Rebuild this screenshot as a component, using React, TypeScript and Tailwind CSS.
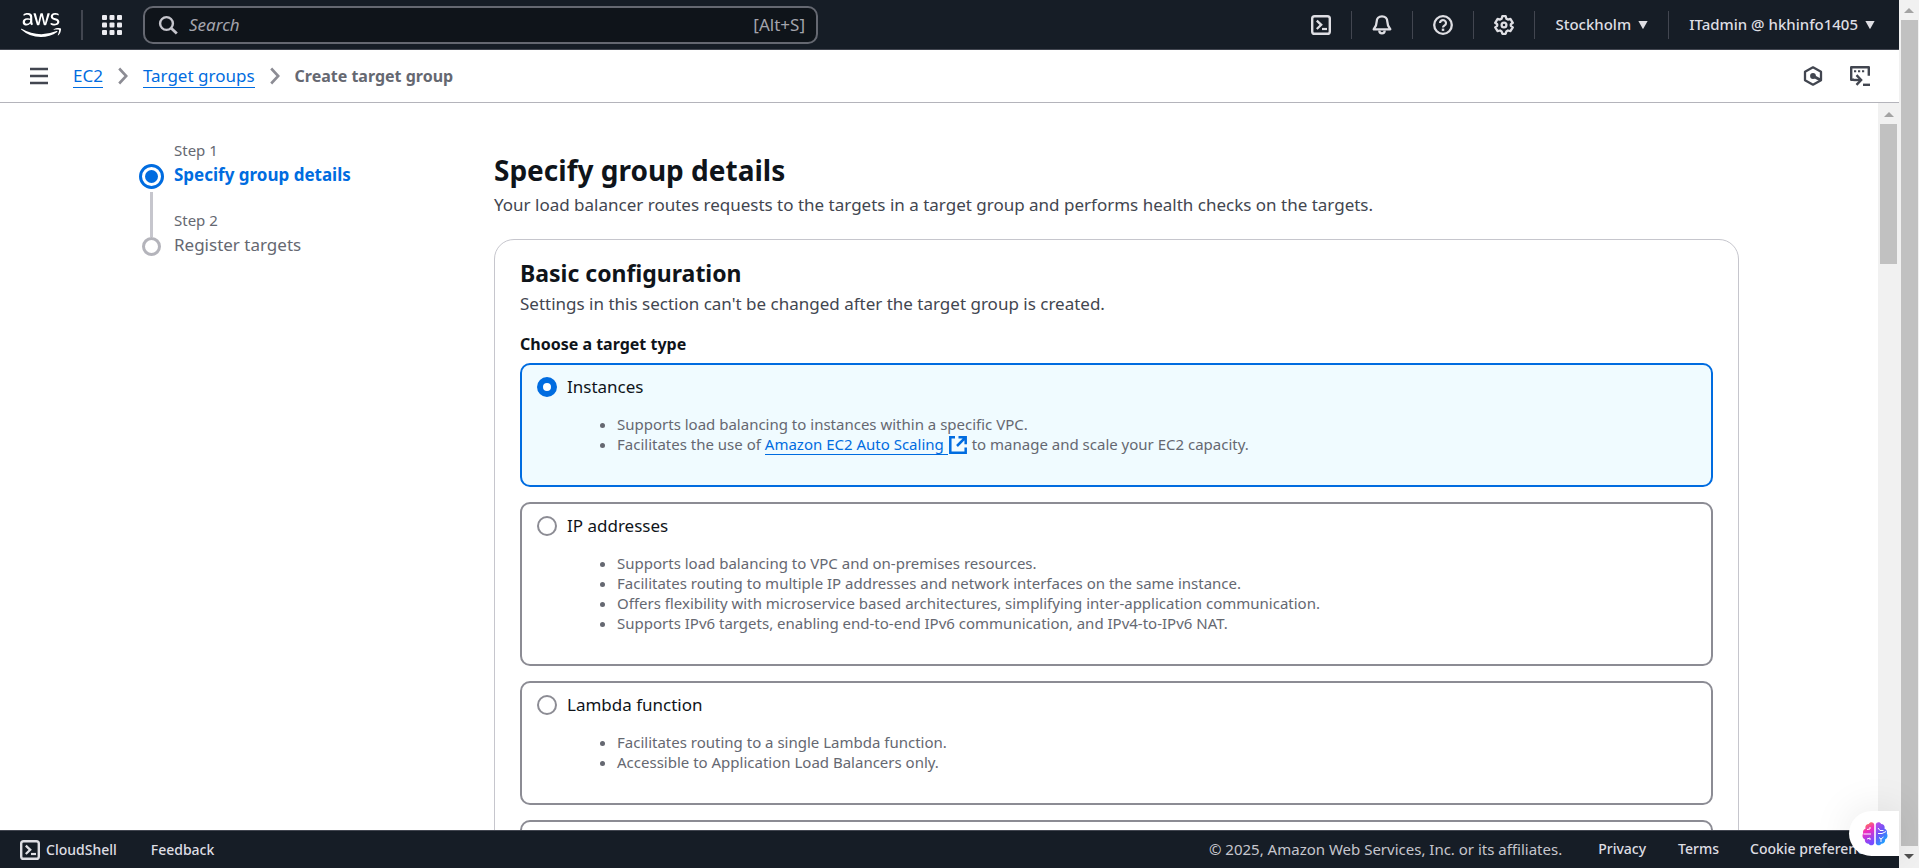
import React, { useState } from "react";
import { FaAws } from "react-icons/fa6";

const stroke = {
  fill: "none",
  stroke: "currentColor",
  strokeWidth: 2,
  strokeLinejoin: "round" as const,
};

function Icon({ size = "size-5", children }: { size?: string; children: React.ReactNode }) {
  return (
    <svg viewBox="0 0 20 20" className={`${size} shrink-0`} aria-hidden="true" {...stroke}>
      {children}
    </svg>
  );
}

function AppsIcon() {
  return (
    <svg viewBox="0 0 20 20" className="size-5 shrink-0" fill="currentColor" aria-hidden="true">
      {[0, 7.5, 15].map((y) =>
        [0, 7.5, 15].map((x) => <rect key={`${x}-${y}`} x={x} y={y} width="5" height="5" rx="1" />),
      )}
    </svg>
  );
}

function SearchIcon() {
  return (
    <Icon>
      <circle cx="8.5" cy="8.5" r="6.4" strokeWidth="2.4" />
      <path d="M13 13l5.8 5.6" strokeWidth="2.8" />
    </Icon>
  );
}

function ShellIcon() {
  return (
    <Icon>
      <rect x="1.2" y="1.2" width="17.6" height="17.6" rx="2.4" strokeWidth="2.4" />
      <path d="M5.8 5.6l4.4 4.2-4.4 4.2" strokeLinejoin="miter" strokeWidth="2.3" />
      <path d="M11 14h5" strokeWidth="2.2" />
    </Icon>
  );
}

function BellIcon() {
  return (
    <Icon>
      <path d="M10 1.3c-3.300 0-5.300 2.300-5.300 5.200 0 3.800-.9 5.300-3 7.800h16.600c-2.100-2.500-3-4-3-7.800 0-2.900-2-5.200-5.300-5.200z" strokeWidth="2.3" />
      <path d="M7.300 15.500a2.700 2.900 0 0 0 5.400 0" strokeWidth="2.3" />
    </Icon>
  );
}

function HelpIcon() {
  return (
    <Icon>
      <circle cx="10" cy="10" r="8.800" strokeWidth="2.3" />
      <path d="M7 8a3 2.900 0 1 1 4.600 2.400c-1 .7-1.600 1-1.600 2.100" strokeWidth="2.2" />
      <path d="M10 13.600v2.300" strokeWidth="2.5" />
    </Icon>
  );
}

function GearIcon() {
  return (
    <Icon>
      <path d="M8.300 1.200h3.400l.7 2.500 1.500.9 2.500-.7 2.400 3.900-2 1.400v1.600l2 1.500-2.400 3.900-2.500-.7-1.500.9-.7 2.400H8.300l-.7-2.400-1.500-.9-2.500.7-2.400-3.900 2-1.500V9.200l-2-1.400 2.400-3.900 2.500.7 1.500-.9z" strokeWidth="2.3" />
      <circle cx="10" cy="10" r="2.400" strokeWidth="2.3" />
    </Icon>
  );
}

function CaretIcon() {
  return (
    <svg viewBox="0 0 10 8" className="h-2 w-[10px] shrink-0" fill="currentColor" aria-hidden="true">
      <path d="M.4 0h9.200L5.300 7.800h-.6z" />
    </svg>
  );
}

function MenuIcon() {
  return (
    <Icon>
      <path d="M1 3h18M1 10h18M1 17h18" strokeWidth="2.500" />
    </Icon>
  );
}

function ChevronIcon() {
  return (
    <svg viewBox="0 0 10 18" className="h-[18px] w-[10px] shrink-0 text-[#8c8c94]" aria-hidden="true" {...stroke}>
      <path d="M1.200 1.500L8.200 9l-7 7.500" strokeWidth="2.600" strokeLinejoin="miter" />
    </svg>
  );
}

function HexIcon() {
  return (
    <Icon>
      <path d="M10 1.300l8 4.400v8.600l-8 4.400-8-4.400V5.700z" strokeWidth="2.300" />
      <circle cx="10" cy="10" r="2.900" fill="currentColor" stroke="none" />
      <path d="M10 10l7.500 4" strokeWidth="2.700" />
    </Icon>
  );
}

function WindowIcon() {
  return (
    <Icon>
      <path d="M4 13.800H1.200V1.200h17.600v8.500" strokeWidth="2.400" />
      <path d="M4 5.200h2.200M8 5.200h2.200M12 5.200h2.200" />
      <path d="M3.500 14h7" strokeWidth="2.400" />
      <path d="M6.500 9.200l4.600 4.800-4.600 4.800" strokeLinejoin="miter" strokeWidth="2.400" />
      <path d="M13 18.800h7" strokeWidth="2.400" />
    </Icon>
  );
}

function ExternalIcon() {
  return (
    <svg viewBox="0 0 18 18" className="mx-px inline size-[18px] align-[-4px]" aria-hidden="true" {...stroke} strokeLinejoin="miter">
      <path d="M6 1.300H1.300v15.400h15.400V11.500" strokeWidth="2.500" />
      <path d="M9.500 1.300h7.200v7M16.300 1.700L8 10" strokeWidth="2.500" />
    </svg>
  );
}

function BrainIcon() {
  return (
    <svg viewBox="0 0 26 26" className="size-[26px]" aria-hidden="true">
      <defs>
        <linearGradient id="left" x1="0" y1="0" x2="0.300" y2="1">
          <stop offset="0" stopColor="#ff9a2e" />
          <stop offset="0.450" stopColor="#f02cc0" />
          <stop offset="1" stopColor="#7a4bff" />
        </linearGradient>
        <linearGradient id="right" x1="0" y1="0" x2="0.600" y2="1">
          <stop offset="0" stopColor="#c447e8" />
          <stop offset="0.500" stopColor="#6a55f7" />
          <stop offset="1" stopColor="#17a8ff" />
        </linearGradient>
      </defs>
      <path d="M12.200 3.500C11.500.8 8 .6 6.800 3 4 3 2.800 5.500 3.600 7.600 1.400 8.500.6 10.500 1.200 12.300-.2 14.500.6 17.300 2.800 18.300c-.2 2.700 1.700 4.500 3.900 4.400 1.300 2.300 4.700 2.200 5.500-.4z" fill="url(#left)" />
      <path d="M13.800 3.500C14.500.8 18 .6 19.200 3c2.800 0 4 2.500 3.200 4.600 2.200.9 3 2.900 2.400 4.700 1.400 2.200.6 5-1.600 6 .2 2.700-1.700 4.500-3.900 4.400-1.300 2.300-4.700 2.200-5.500-.4z" fill="url(#right)" />
      <path d="M1.500 13H9M5 8.500l3-.5V6M5 18l3-1v2M16 7l2 2.500h3.500M16 12.500h4l4-2M17 16.500l2 1.500v3M19 18l2.500-2" stroke="#fff" strokeWidth="1" fill="none" />
    </svg>
  );
}

function Divider() {
  return <span className="h-7 w-px shrink-0 bg-[#424650]" />;
}

function TopBar() {
  return (
    <header className="flex h-[50px] shrink-0 items-center border-b border-[#424650] bg-[#161d26] pl-[21px] text-[#dedee3]">
      <a href="#home" aria-label="AWS home" className="text-white">
        <FaAws className="h-8 w-10" />
      </a>
      <span className="ml-5 h-[30px] w-0.5 shrink-0 bg-[#424650]" />
      <button aria-label="Services" className="ml-[19px] text-[#ebebf0]">
        <AppsIcon />
      </button>
      <label className="ml-[21px] flex h-[38px] max-w-[675px] flex-1 items-center rounded-[10px] border-2 border-[#656871] bg-[#0f141a] pr-[11px] pl-[13px] text-[#a4a4ad]">
        <span className="text-[#c6c6cd]">
          <SearchIcon />
        </span>
        <input
          type="search"
          aria-label="Search"
          placeholder="Search"
          className="ml-[11px] min-w-0 flex-1 bg-transparent text-[17px] italic outline-none placeholder:text-[#a4a4ad]"
        />
        <span className="text-[17px] whitespace-nowrap">[Alt+S]</span>
      </label>
      <nav aria-label="Account tools" className="ml-auto flex items-center gap-5 pr-6 text-[15px] font-medium whitespace-nowrap">
        <button aria-label="CloudShell"><ShellIcon /></button>
        <Divider />
        <button aria-label="Notifications"><BellIcon /></button>
        <Divider />
        <button aria-label="Help"><HelpIcon /></button>
        <Divider />
        <button aria-label="Settings"><GearIcon /></button>
        <Divider />
        <button className="flex items-center gap-[7px]">Stockholm <CaretIcon /></button>
        <Divider />
        <button className="flex items-center gap-[7px]">ITadmin @ hkhinfo1405 <CaretIcon /></button>
      </nav>
    </header>
  );
}

function Breadcrumbs() {
  return (
    <div className="flex h-[53px] shrink-0 items-center border-b border-[#b4b4bb] pr-[29px] pl-[29px] text-[17px] text-[#424650]">
      <button aria-label="Open navigation"><MenuIcon /></button>
      <nav aria-label="Breadcrumbs" className="ml-6 flex items-center gap-[15px] whitespace-nowrap">
        <a href="#ec2" className="border-b border-[#006ce0] leading-[22px] text-[#006ce0]">EC2</a>
        <ChevronIcon />
        <a href="#target-groups" className="border-b border-[#006ce0] leading-[22px] text-[#006ce0]">Target groups</a>
        <ChevronIcon />
        <span className="text-base font-bold text-[#656871]">Create target group</span>
      </nav>
      <div className="ml-auto flex items-center gap-[27px]">
        <button aria-label="Amazon Q"><HexIcon /></button>
        <button aria-label="Open side panel"><WindowIcon /></button>
      </div>
    </div>
  );
}

function Steps() {
  return (
    <ol className="pt-[37px] whitespace-nowrap">
      <li className="flex gap-[10px]">
        <div className="flex w-[25px] flex-col items-center pt-6">
          <span className="grid size-[25px] shrink-0 place-items-center rounded-full border-[3px] border-[#006ce0]">
            <span className="size-[13px] rounded-full bg-[#006ce0]" />
          </span>
          <span className="mt-[3px] mb-px w-[3px] flex-1 bg-[#c6c6cd]" />
        </div>
        <div className="h-[98px]">
          <p className="text-[15px] leading-5 text-[#656871]">Step 1</p>
          <p className="text-[17px] leading-[30px] font-bold text-[#006ce0]">Specify group details</p>
        </div>
      </li>
      <li className="-mt-7 flex gap-[10px]">
        <div className="flex w-[25px] justify-center pt-[27px]">
          <span className="size-[19px] rounded-full border-[3px] border-[#b4b4bb]" />
        </div>
        <div>
          <p className="text-[15px] leading-5 text-[#656871]">Step 2</p>
          <p className="text-[17px] leading-[30px] text-[#656871]">Register targets</p>
        </div>
      </li>
    </ol>
  );
}

const targetTypes: { id: string; title: string; points: React.ReactNode[] }[] = [
  {
    id: "instances",
    title: "Instances",
    points: [
      "Supports load balancing to instances within a specific VPC.",
      <>
        Facilitates the use of{" "}
        <a href="#auto-scaling" className="text-[#006ce0]">
          <span className="border-b border-[#006ce0] pr-1">Amazon EC2 Auto Scaling</span>
          <ExternalIcon />
        </a>{" "}
        to manage and scale your EC2 capacity.
      </>,
    ],
  },
  {
    id: "ip",
    title: "IP addresses",
    points: [
      "Supports load balancing to VPC and on-premises resources.",
      "Facilitates routing to multiple IP addresses and network interfaces on the same instance.",
      "Offers flexibility with microservice based architectures, simplifying inter-application communication.",
      "Supports IPv6 targets, enabling end-to-end IPv6 communication, and IPv4-to-IPv6 NAT.",
    ],
  },
  {
    id: "lambda",
    title: "Lambda function",
    points: ["Facilitates routing to a single Lambda function.", "Accessible to Application Load Balancers only."],
  },
  { id: "alb", title: "", points: [] },
];

function TargetTypes() {
  const [selected, setSelected] = useState("instances");
  return (
    <fieldset>
      <legend className="text-base leading-6 font-bold text-[#0f141a]">Choose a target type</legend>
      <div className="mt-[7px] flex flex-col gap-[15px]">
        {targetTypes.map((type) => (
          <div
            key={type.id}
            className="rounded-[10px] border-2 border-[#8c8c94] px-[15px] pt-[10px] pb-[31px] has-checked:border-[#006ce0] has-checked:bg-[#f0fbff]"
          >
            <label className="flex items-center gap-[10px] text-[17px] leading-6 text-[#0f141a]">
              <input
                type="radio"
                name="target-type"
                value={type.id}
                aria-label={type.title || type.id}
                checked={selected === type.id}
                onChange={() => setSelected(type.id)}
                className="size-5 appearance-none rounded-full border-2 border-[#8c8c94] bg-white checked:border-[6px] checked:border-[#006ce0]"
              />
              {type.title}
            </label>
            <ul className="mt-[15px] list-disc pl-20 text-[15px] leading-5 text-[#656871]">
              {type.points.map((point, i) => (
                <li key={i} className="h-5">{point}</li>
              ))}
            </ul>
          </div>
        ))}
      </div>
    </fieldset>
  );
}

function Footer() {
  return (
    <footer className="flex h-[38px] shrink-0 items-center border-t border-[#424650] bg-[#161d26] pl-5 text-sm font-medium whitespace-nowrap text-[#dedee3]">
      <button className="flex items-center gap-[6px]"><ShellIcon /> CloudShell</button>
      <button className="ml-[34px]">Feedback</button>
      <div className="ml-auto flex items-center">
        <span className="mr-9 text-[15px] font-normal text-[#c6c6cd]">© 2025, Amazon Web Services, Inc. or its affiliates.</span>
        <a href="#privacy" className="mr-8">Privacy</a>
        <a href="#terms" className="mr-[31px]">Terms</a>
        <a href="#cookies" className="w-[149px] overflow-hidden">Cookie preferences</a>
      </div>
    </footer>
  );
}

function Arrow({ down = false }: { down?: boolean }) {
  return (
    <svg viewBox="0 0 10 5" className={down ? "h-[5px] w-[10px] text-[#505050]" : "h-[5px] w-[10px] text-[#a3a3a3]"} fill="currentColor" aria-hidden="true">
      <path d={down ? "M0 0h10L5 5z" : "M0 5h10L5 0z"} />
    </svg>
  );
}

export default function App() {
  return (
    <div className="flex h-screen overflow-hidden bg-white font-['Noto_Sans',sans-serif]">
      <div className="relative flex min-w-0 flex-1 flex-col">
        <TopBar />
        <Breadcrumbs />
        <div className="flex min-h-0 flex-1">
          <main className="min-w-0 flex-1 overflow-hidden">
            <div className="mx-auto grid max-w-[1600px] grid-cols-[355px_1fr]">
              <Steps />
              <div className="pt-[47px]">
                <h1 className="text-[28px] leading-10 font-bold text-[#0f141a]">Specify group details</h1>
                <p className="mt-[3px] text-[17px] leading-6 text-[#424650]">
                  Your load balancer routes requests to the targets in a target group and performs health checks on the targets.
                </p>
                <section className="mt-[22px] rounded-[20px] border border-[#c6c6cd] px-[25px] pt-[17px] pb-6">
                  <h2 className="text-[23px] leading-8 font-bold text-[#0f141a]">Basic configuration</h2>
                  <p className="mt-[3px] mb-4 text-[17px] leading-6 text-[#424650]">
                    Settings in this section can't be changed after the target group is created.
                  </p>
                  <TargetTypes />
                </section>
              </div>
            </div>
          </main>
          <div className="flex w-[21px] shrink-0 flex-col items-center bg-[#f1f1f1] pt-[9px]" aria-hidden="true">
            <Arrow />
            <span className="mt-[7px] h-[140px] w-[17px] bg-[#c1c1c1]" />
          </div>
        </div>
        <Footer />
        <button
          aria-label="Open assistant"
          className="absolute right-0 bottom-3 flex h-[45px] w-[50px] items-center rounded-l-full bg-white pl-[13px] shadow-[0_0_40px_rgba(0,0,0,0.1)]"
        >
          <BrainIcon />
        </button>
      </div>
      <div className="flex w-5 shrink-0 flex-col items-center bg-[#f1f1f1] pt-2 pb-[9px]" aria-hidden="true">
        <Arrow />
        <span className="mt-[7px] mb-2 w-[17px] flex-1 bg-[#c1c1c1]" />
        <Arrow down />
      </div>
    </div>
  );
}
